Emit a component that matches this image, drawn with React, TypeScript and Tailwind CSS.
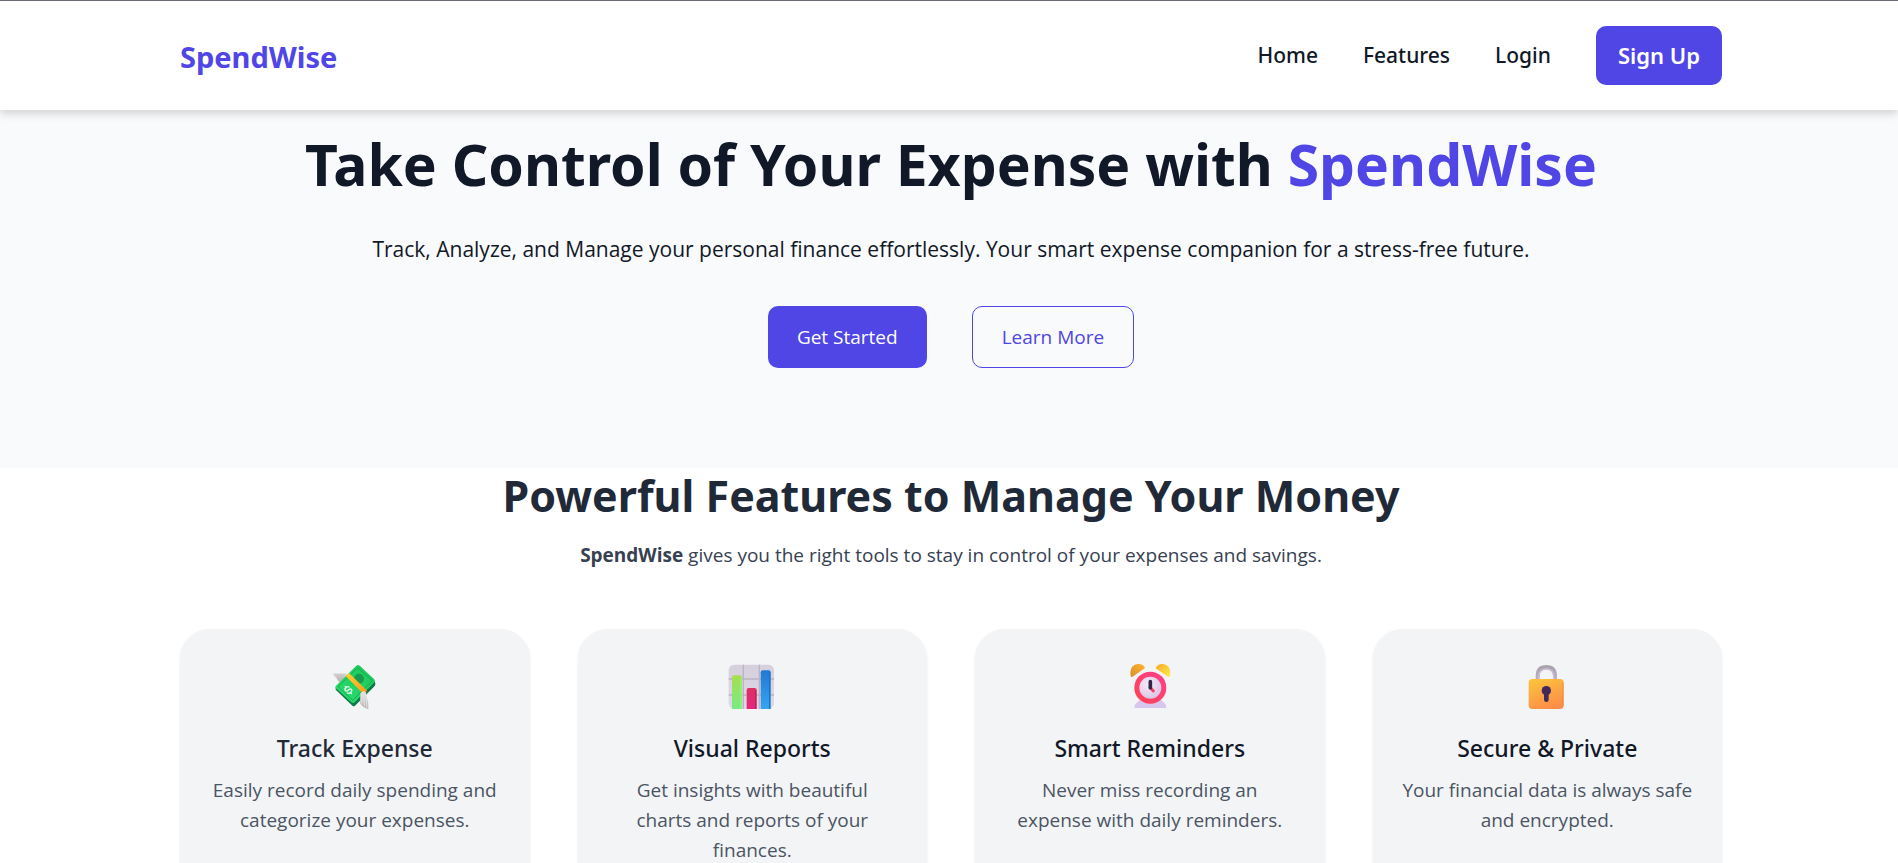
import type { ReactNode } from "react";

function MoneyIcon() {
  return (
    <svg viewBox="35 42 138 138" className="size-[46px]" aria-hidden="true">
      <defs>
        <linearGradient id="wing" x1="0" y1="0" x2="0" y2="1">
          <stop offset="0" stopColor="#e6e4e4" />
          <stop offset="1" stopColor="#b9b4b6" />
        </linearGradient>
        <linearGradient id="bill" x1="0" y1="1" x2="1" y2="0">
          <stop offset="0" stopColor="#2be070" />
          <stop offset="1" stopColor="#1cc45a" />
        </linearGradient>
        <linearGradient id="band" x1="0" y1="0" x2="1" y2="1">
          <stop offset="0" stopColor="#ffd02e" />
          <stop offset="1" stopColor="#fb9a1e" />
        </linearGradient>
      </defs>
      <path d="M36 69H80L78 84L58 96Q52 93 50 86Q41 79 36 69Z" fill="url(#wing)" />
      <path d="M42 75H74M48 81H70M51 87H66" stroke="#b3aeb0" strokeWidth="2" />
      <path d="M46 113L97 160Q101 163 106 159L165 101L163 95L118 48Z" fill="#0d6e45" />
      <path d="M97 168L46 119V112L100 156L162 94L165 102Q165 107 161 110L104 167Q100 170 97 168Z" fill="#0d7a49" />
      <path d="M47 107L108 47Q113 43 118 47L161 87Q166 92 162 97L103 157Q98 161 93 157L47 115Q43 111 47 107Z" fill="url(#bill)" />
      <path d="M53 110L112 53L156 92L97 151Z" fill="none" stroke="#13974a" strokeWidth="2" />
      <circle cx="116" cy="86" r="15" fill="#169c4e" />
      <path d="M76 78L86 69L140 122L127 130Z" fill="url(#band)" />
      <path d="M127 130L140 121L138 128L130 134Z" fill="#d96c0c" />
      <g transform="translate(84 120) rotate(-42)" fill="none" stroke="#e4f9ec" strokeWidth="4" strokeLinecap="round">
        <path d="M8 -5Q6 -10 0 -10Q-8 -10 -8 -5Q-8 0 0 0Q8 0 8 5Q8 10 0 10Q-7 10 -8 5" />
        <path d="M0 -14V-10M0 10V14" />
      </g>
      <path d="M120 130Q128 121 136 125L139 140Q146 158 144 178Q127 173 119 160Z" fill="url(#wing)" />
      <path d="M124 135V160M130 134L132 169M136 134L140 174" stroke="#efecec" strokeWidth="2" />
    </svg>
  );
}

function ChartIcon() {
  return (
    <svg viewBox="43 42 138 138" className="size-[46px] overflow-visible" aria-hidden="true">
      <defs>
        <linearGradient id="board" x1="0" y1="0" x2="0" y2="1">
          <stop offset="0" stopColor="#d6cfdc" />
          <stop offset="1" stopColor="#dfd8e6" />
        </linearGradient>
        <linearGradient id="lime" x1="0" y1="0" x2="0" y2="1">
          <stop offset="0" stopColor="#a8de52" />
          <stop offset="1" stopColor="#78ea85" />
        </linearGradient>
        <linearGradient id="pink" x1="0" y1="0" x2="0" y2="1">
          <stop offset="0" stopColor="#df2f62" />
          <stop offset="1" stopColor="#e3287c" />
        </linearGradient>
        <linearGradient id="blue" x1="0" y1="0" x2="0" y2="1">
          <stop offset="0" stopColor="#2378d6" />
          <stop offset="1" stopColor="#35a5f1" />
        </linearGradient>
      </defs>
      <rect x="42" y="44" width="136" height="133" rx="17" fill="url(#board)" />
      <path d="M86 44V177M134 44V177M42 87H178M42 135H178" stroke="#bbb4c4" strokeWidth="4" />
      <path d="M52 177V82Q52 76 58 76H76Q82 76 82 82V177Z" fill="url(#lime)" />
      <path d="M96 177V120Q96 114 102 114H120Q126 114 126 120V177Z" fill="url(#pink)" />
      <path d="M138 177V67Q138 61 144 61H162Q168 61 168 67V177Z" fill="url(#blue)" />
      <path d="M79 82V177" stroke="#98f27b" strokeWidth="4" />
      <path d="M123 121V177" stroke="#c51f5c" strokeWidth="4" />
      <path d="M165 67V177" stroke="#1f6fc4" strokeWidth="4" />
    </svg>
  );
}

function ClockIcon() {
  return (
    <svg viewBox="35 42 138 138" className="size-[46px]" aria-hidden="true">
      <defs>
        <linearGradient id="bellLeft" x1="0" y1="1" x2="1" y2="0">
          <stop offset="0" stopColor="#d98f2b" />
          <stop offset="1" stopColor="#ffb52f" />
        </linearGradient>
        <linearGradient id="bellRight" x1="0" y1="0" x2="1" y2="1">
          <stop offset="0" stopColor="#f4a928" />
          <stop offset="1" stopColor="#ffee4a" />
        </linearGradient>
        <linearGradient id="rim" x1="1" y1="0" x2="0" y2="1">
          <stop offset="0" stopColor="#ff3f8d" />
          <stop offset="1" stopColor="#ff4250" />
        </linearGradient>
        <radialGradient id="face" cx="0.4" cy="0.35" r="0.7">
          <stop offset="0" stopColor="#f6ebfb" />
          <stop offset="1" stopColor="#d8c4e2" />
        </radialGradient>
      </defs>
      <path d="M58 174Q56 166 60 163L75 148H135L150 163Q154 167 152 174Z" fill="#d9c6ec" />
      <path d="M47 80Q42 62 50 51Q58 41 70 42Q84 43 89 53Q88 55 85 57L54 79Q49 82 47 80Z" fill="url(#bellLeft)" />
      <path d="M163 80Q168 62 160 51Q152 41 140 42Q127 43 121 53Q122 56 125 58L156 79Q161 82 163 80Z" fill="url(#bellRight)" />
      <circle cx="105" cy="113" r="48" fill="url(#rim)" />
      <circle cx="105" cy="113" r="33" fill="url(#face)" />
      <path d="M105 113L114 123" stroke="#fb3c62" strokeWidth="9" strokeLinecap="round" />
      <path d="M105 95V113" stroke="#33234b" strokeWidth="11" strokeLinecap="round" />
    </svg>
  );
}

function LockIcon() {
  return (
    <svg viewBox="43 42 138 138" className="size-[46px]" aria-hidden="true">
      <defs>
        <linearGradient id="shackle" x1="0" y1="0" x2="0" y2="1">
          <stop offset="0" stopColor="#aaa4ad" />
          <stop offset="1" stopColor="#bfb2cb" />
        </linearGradient>
        <linearGradient id="lockBody" x1="0.3" y1="0" x2="0.7" y2="1">
          <stop offset="0" stopColor="#fcc03d" />
          <stop offset="1" stopColor="#fd8b48" />
        </linearGradient>
      </defs>
      <path d="M84 96V78Q84 51 110 51T136 78V96" fill="none" stroke="url(#shackle)" strokeWidth="12" />
      <path d="M88 90V79Q89 57 110 57Q131 57 132 79V90" fill="none" stroke="#cdbfd8" strokeWidth="4" />
      <rect x="57" y="87" width="105" height="90" rx="11" fill="url(#lockBody)" />
      <path d="M160 97V166" stroke="#e0873a" strokeWidth="2" />
      <circle cx="110" cy="122" r="14" fill="#43285a" />
      <path d="M103 125H117V149Q117 156 110 156T103 149Z" fill="#43285a" />
    </svg>
  );
}

type Feature = { icon: ReactNode; title: string; text: string; tone: string };

const features: Feature[] = [
  {
    icon: <MoneyIcon />,
    title: "Track Expense",
    text: "Easily record daily spending and\ncategorize your expenses.",
    tone: "text-[#1f2937]",
  },
  {
    icon: <ChartIcon />,
    title: "Visual Reports",
    text: "Get insights with beautiful\ncharts and reports of your\nfinances.",
    tone: "text-[#111827]",
  },
  {
    icon: <ClockIcon />,
    title: "Smart Reminders",
    text: "Never miss recording an\nexpense with daily reminders.",
    tone: "text-[#111827]",
  },
  {
    icon: <LockIcon />,
    title: "Secure & Private",
    text: "Your financial data is always safe\nand encrypted.",
    tone: "text-[#111827]",
  },
];

export default function App() {
  return (
    <div className="min-h-screen bg-white font-['Open_Sans',sans-serif] text-[#111827]">
      <header className="relative border-t border-[#6b6b7b] bg-white shadow-[0_4px_8px_rgba(0,0,0,0.15)]">
        <div className="flex h-[109px] items-center justify-between pr-44 pl-[180px]">
          <a href="#home" className="pt-0.5 font-['Noto_Sans',sans-serif] text-[29px] font-bold text-[#4f46e5]">
            SpendWise
          </a>
          <nav className="flex items-center gap-[45px] font-['Noto_Sans',sans-serif] text-[21px] font-medium">
            <a href="#home">Home</a>
            <a href="#features">Features</a>
            <a href="#login">Login</a>
            <a
              href="#signup"
              className="flex h-[59px] items-center rounded-[10px] bg-[#4f46e5] px-[22px] text-[22px] font-semibold text-white"
            >
              Sign Up
            </a>
          </nav>
        </div>
      </header>

      <section id="home" className="bg-[#f9fafc] pt-4 pr-44 pb-[100px] pl-[180px] text-center">
        <h1 className="font-['Noto_Sans',sans-serif] text-[57px] leading-[76px] font-bold">
          Take Control of Your Expense with <span className="text-[#4f46e5]">SpendWise</span>
        </h1>
        <p className="mt-8 text-[21px] leading-[30px]">
          Track, Analyze, and Manage your personal finance effortlessly. Your smart expense companion for a
          stress-free future.
        </p>
        <div className="mt-[42px] flex justify-center gap-[45px] text-[19px]">
          <button type="button" className="h-[62px] rounded-[10px] bg-[#4f46e5] px-[29px] text-white">
            Get Started
          </button>
          <button type="button" className="h-[62px] rounded-[10px] border border-[#4f46e5] px-[29px] text-[#4f46e5]">
            Learn More
          </button>
        </div>
      </section>

      <section id="features" className="pr-44 pb-20 pl-[180px] text-center">
        <h2 className="font-['Noto_Sans',sans-serif] text-[43px] leading-[56px] font-bold text-[#1f2937]">
          Powerful Features to Manage Your Money
        </h2>
        <p className="mt-4 text-[19px] leading-[30px] text-[#374151]">
          <strong className="font-bold">SpendWise</strong> gives you the right tools to stay in control of your
          expenses and savings.
        </p>
        <div className="mt-[59px] grid grid-cols-4 gap-12">
          {features.map((feature) => (
            <article
              key={feature.title}
              className="flex flex-col items-center rounded-[30px] bg-[#f3f4f6] px-6 pt-[35px] pb-[30px] shadow-[0_1px_3px_rgba(0,0,0,0.08)]"
            >
              {feature.icon}
              <h3
                className={`mt-[22px] font-['Noto_Sans',sans-serif] text-[23px] leading-[32px] font-medium ${feature.tone}`}
              >
                {feature.title}
              </h3>
              <p className="mt-[11px] text-[19px] leading-[30px] whitespace-pre-line text-[#4b5563]">{feature.text}</p>
            </article>
          ))}
        </div>
      </section>
    </div>
  );
}
